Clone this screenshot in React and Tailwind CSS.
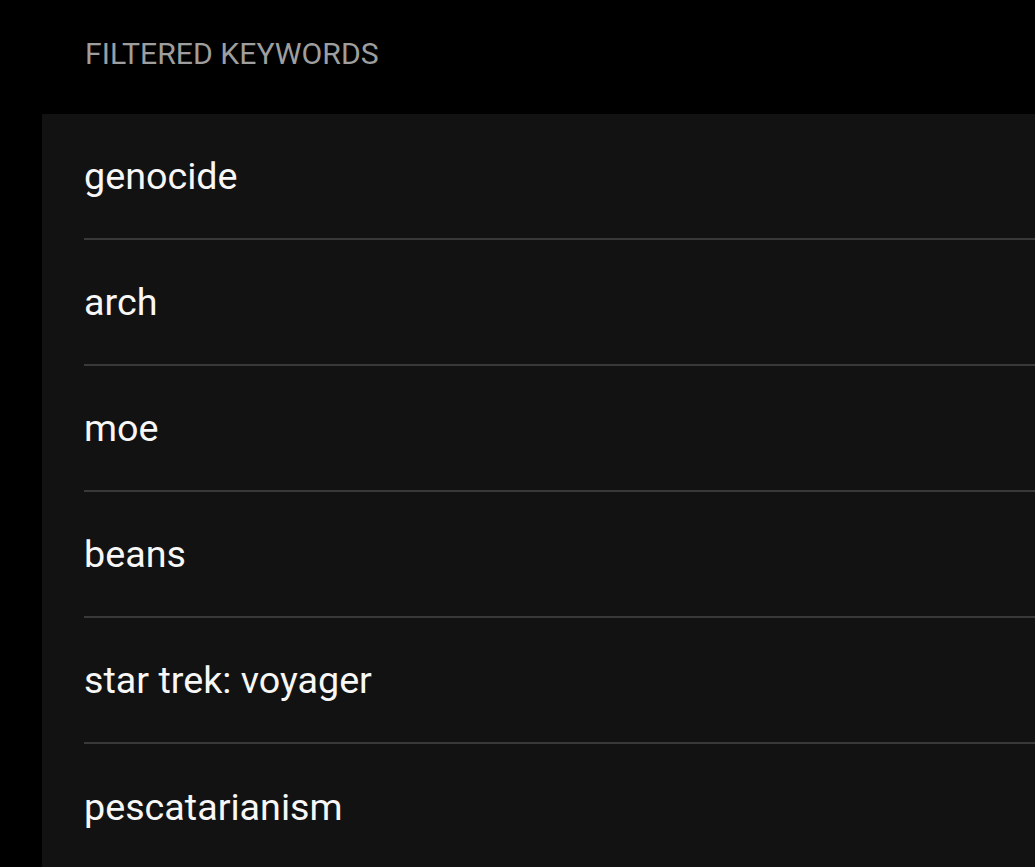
const keywords = ['genocide', 'arch', 'moe', 'beans', 'star trek: voyager', 'pescatarianism'];

export default function App() {
  return (
    <div className="min-h-screen w-full bg-black font-['Roboto',sans-serif] overflow-hidden">
      <header className="h-[114px] pb-[6px] pl-[85px] flex items-center">
        <h2 className="text-[30.2px] leading-none text-[#9e9e9e]">FILTERED KEYWORDS</h2>
      </header>

      <ul className="ml-[42px] bg-[#121212] min-h-[753px] pl-[42px]">
        {keywords.map((word, i) => (
          <li
            key={word}
            className={`h-[126px] flex items-center text-[37.7px] text-[#f7f7f7] ${i < keywords.length - 1 ? 'border-b-2 border-[#393939]' : ''}`}
          >
            <span>{word}</span>
          </li>
        ))}
      </ul>
    </div>
  );
}
